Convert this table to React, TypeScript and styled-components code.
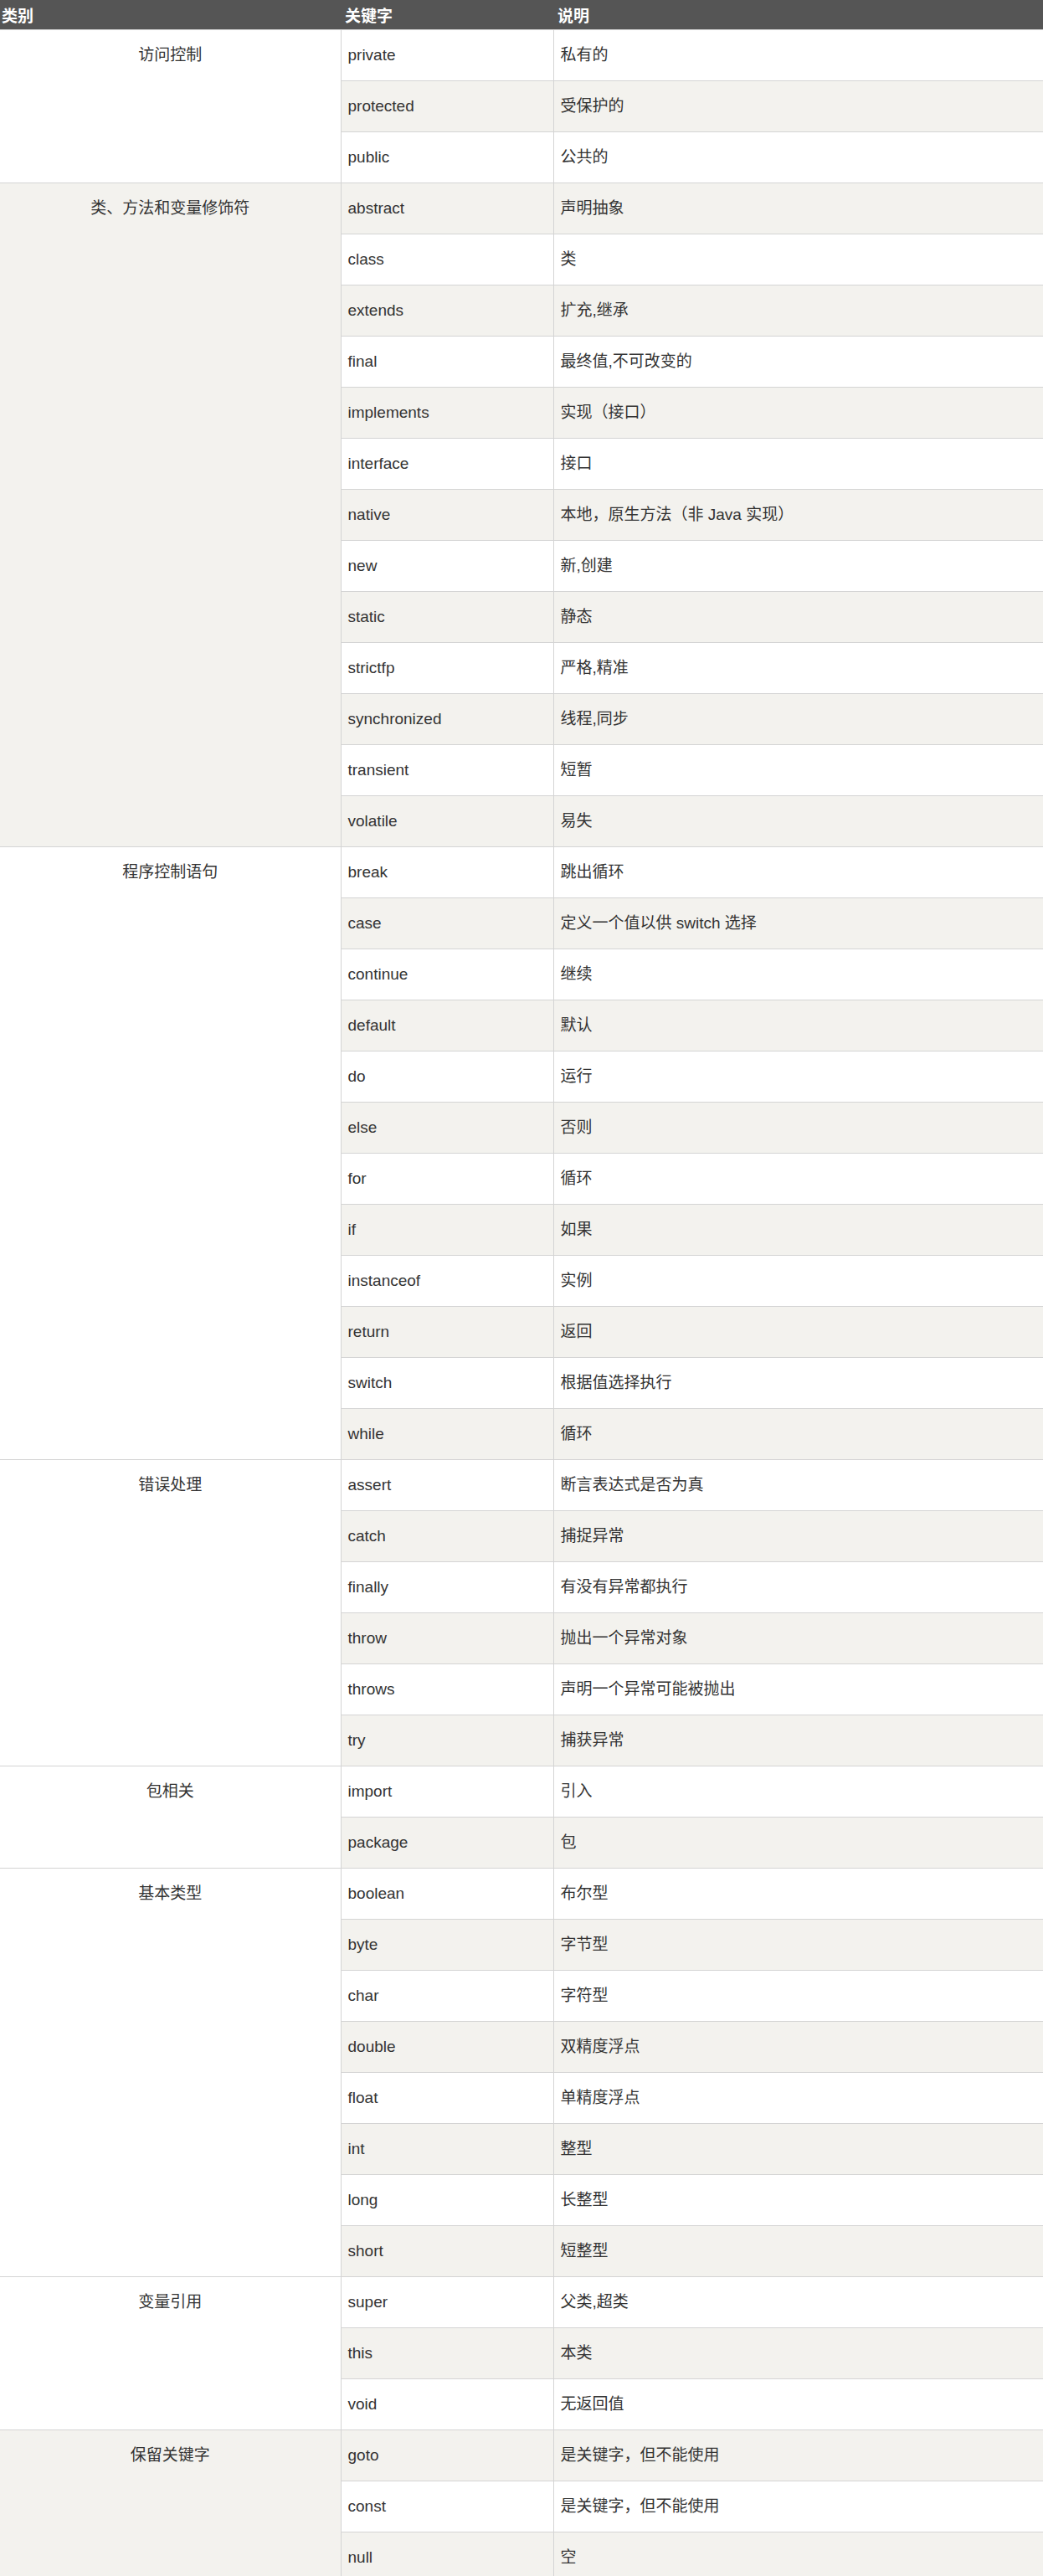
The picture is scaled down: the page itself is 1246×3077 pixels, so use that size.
import React from "react";
import styled, { createGlobalStyle } from "styled-components";

const GlobalStyle = createGlobalStyle`
    html, body {
        margin: 0;
        padding: 0;
        background: #fff;
    }
    body {
        font-family: "Liberation Sans", Arial, "Noto Sans CJK SC", sans-serif;
        color: #333;
    }
`

type Keyword = [string, string];
type Group = { name: string; items: Keyword[] };

const groups: Group[] = [
    { name: "访问控制", items: [["private", "私有的"], ["protected", "受保护的"], ["public", "公共的"]] },
    {
        name: "类、方法和变量修饰符",
        items: [
            ["abstract", "声明抽象"],
            ["class", "类"],
            ["extends", "扩充,继承"],
            ["final", "最终值,不可改变的"],
            ["implements", "实现（接口）"],
            ["interface", "接口"],
            ["native", "本地，原生方法（非 Java 实现）"],
            ["new", "新,创建"],
            ["static", "静态"],
            ["strictfp", "严格,精准"],
            ["synchronized", "线程,同步"],
            ["transient", "短暂"],
            ["volatile", "易失"],
        ],
    },
    {
        name: "程序控制语句",
        items: [
            ["break", "跳出循环"],
            ["case", "定义一个值以供 switch 选择"],
            ["continue", "继续"],
            ["default", "默认"],
            ["do", "运行"],
            ["else", "否则"],
            ["for", "循环"],
            ["if", "如果"],
            ["instanceof", "实例"],
            ["return", "返回"],
            ["switch", "根据值选择执行"],
            ["while", "循环"],
        ],
    },
    {
        name: "错误处理",
        items: [
            ["assert", "断言表达式是否为真"],
            ["catch", "捕捉异常"],
            ["finally", "有没有异常都执行"],
            ["throw", "抛出一个异常对象"],
            ["throws", "声明一个异常可能被抛出"],
            ["try", "捕获异常"],
        ],
    },
    { name: "包相关", items: [["import", "引入"], ["package", "包"]] },
    {
        name: "基本类型",
        items: [
            ["boolean", "布尔型"],
            ["byte", "字节型"],
            ["char", "字符型"],
            ["double", "双精度浮点"],
            ["float", "单精度浮点"],
            ["int", "整型"],
            ["long", "长整型"],
            ["short", "短整型"],
        ],
    },
    { name: "变量引用", items: [["super", "父类,超类"], ["this", "本类"], ["void", "无返回值"]] },
    { name: "保留关键字", items: [["goto", "是关键字，但不能使用"], ["const", "是关键字，但不能使用"], ["null", "空"]] },
];

const Table = styled.table`
    width: 1246px;
    border-collapse: collapse;
    table-layout: fixed;
    font-size: 19px;
`

const HeadCell = styled.th<{ $first?: boolean }>`
    height: 35px;
    padding: 0 0 0 ${p => (p.$first ? "2px" : "5px")};
    background: #555;
    color: #fff;
    font-weight: bold;
    text-align: left;
    vertical-align: middle;
    border: none;
`

const Row = styled.tr`
    &:nth-child(even) {
        background: #f3f2ee;
    }
`

const Cell = styled.td<{ $last?: boolean }>`
    height: 60px;
    padding: 0 8px;
    line-height: 30px;
    vertical-align: middle;
    border-top: 1px solid #d4d4d4;
    border-bottom: 1px solid #d4d4d4;
    border-left: 1px solid #d4d4d4;
    border-right: ${p => (p.$last ? "none" : "1px solid #d4d4d4")};
`

const CategoryCell = styled.td`
    padding: 15px 8px 0;
    line-height: 30px;
    text-align: center;
    vertical-align: top;
    border-top: 1px solid #d4d4d4;
    border-bottom: 1px solid #d4d4d4;
    border-left: none;
    border-right: 1px solid #d4d4d4;
`

const HeadRow = styled.tr`
    & + tr > td {
        border-top: none;
    }
`

const App = () => {
    return <>
        <GlobalStyle />
        <Table>
            <colgroup>
                <col style={{ width: 407 }} />
                <col style={{ width: 254 }} />
                <col />
            </colgroup>
            <thead>
                <tr>
                    <HeadCell $first>类别</HeadCell>
                    <HeadCell>关键字</HeadCell>
                    <HeadCell>说明</HeadCell>
                </tr>
            </thead>
            <tbody>
                {
                    groups.map(group =>
                        group.items.map(([word, desc], index) => (
                            <Row key={word}>
                                {index === 0 ? <CategoryCell rowSpan={group.items.length}>{group.name}</CategoryCell> : null}
                                <Cell>{word}</Cell>
                                <Cell $last>{desc}</Cell>
                            </Row>
                        ))
                    )
                }
            </tbody>
        </Table>
    </>
}

export default App;
